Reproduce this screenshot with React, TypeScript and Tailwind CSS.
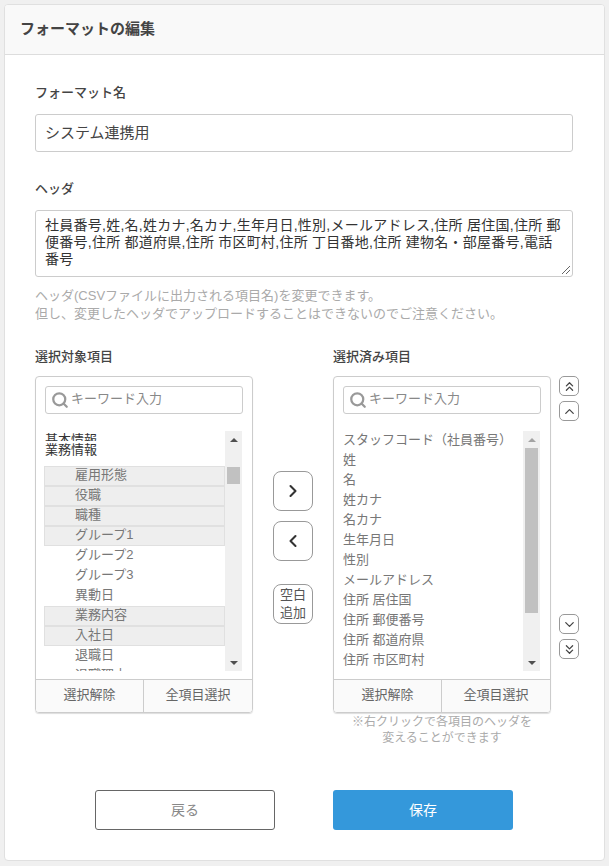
import { ChevronLeft, ChevronRight, ChevronUp, ChevronDown, ChevronsUp, ChevronsDown, Search } from "lucide-react";

const leftItems = [
  { label: "雇用形態", selected: true },
  { label: "役職", selected: true },
  { label: "職種", selected: true },
  { label: "グループ1", selected: true },
  { label: "グループ2", selected: false },
  { label: "グループ3", selected: false },
  { label: "異動日", selected: false },
  { label: "業務内容", selected: true },
  { label: "入社日", selected: true },
  { label: "退職日", selected: false },
  { label: "退職理由", selected: false },
];

const rightItems = [
  "スタッフコード（社員番号）",
  "姓",
  "名",
  "姓カナ",
  "名カナ",
  "生年月日",
  "性別",
  "メールアドレス",
  "住所 居住国",
  "住所 郵便番号",
  "住所 都道府県",
  "住所 市区町村",
];

function SearchBox() {
  return (
    <div className="mx-[9px] mt-[9px] h-[28px] border border-[#ccc] rounded-[3px] flex items-center pl-[5px] gap-[2px] bg-white">
      <Search size={18} strokeWidth={3} className="text-[#999] shrink-0" />
      <span className="text-[13px] leading-[16px] pb-[2px] text-[#888]">キーワード入力</span>
    </div>
  );
}

function ScrollBar({ thumbTop, thumbHeight, upColor }: { thumbTop: number; thumbHeight: number; upColor: string }) {
  return (
    <div className="w-[17px] h-full bg-[#f0f0f0] flex flex-col items-center shrink-0">
      <div className="h-[17px] shrink-0 flex items-center justify-center">
        <div className="w-0 h-0 border-x-[4px] border-x-transparent border-b-[4px]" style={{ borderBottomColor: upColor }} />
      </div>
      <div className="flex-1 w-full px-[2px]">
        <div className="bg-[#c1c1c1] w-full" style={{ marginTop: thumbTop, height: thumbHeight }} />
      </div>
      <div className="h-[17px] shrink-0 flex items-center justify-center">
        <div className="w-0 h-0 border-x-[4px] border-x-transparent border-t-[4px] border-t-[#505050]" />
      </div>
    </div>
  );
}

function PanelFooter() {
  return (
    <div className="mt-[8px] h-[33px] border-t border-[#ccc] bg-[#fafafa] flex text-[13px] leading-[16px] text-[#666] rounded-b-[3px]">
      <div className="w-[108px] border-r border-[#ccc] flex items-center justify-center pb-[3px]">選択解除</div>
      <div className="flex-1 flex items-center justify-center pb-[3px]">全項目選択</div>
    </div>
  );
}

function OrderButton({ children }: { children: React.ReactNode }) {
  return (
    <button className="w-[20px] h-[20px] border border-[#999] rounded-[5px] flex items-center justify-center text-[#444] bg-white">
      {children}
    </button>
  );
}

export default function App() {
  return (
    <div className="min-h-[866px] bg-[#f0f0f0] px-[4px] pt-[4px] pb-[5px] font-['Liberation_Sans','Noto_Sans_CJK_JP',sans-serif]">
      <div className="h-[857px] bg-white border border-[#e0e0e0] rounded-[4px] overflow-hidden">
        <div className="h-[50px] bg-[#f9f9f9] border-b border-[#ddd] flex items-center pl-[15px] text-[15px] font-bold text-[#444]">
          フォーマットの編集
        </div>

        <div className="px-[30px]">
          <label className="block mt-[28px] text-[13px] font-medium text-[#444] leading-[20px]">フォーマット名</label>
          <div className="mt-[11px] h-[38px] w-[538px] border border-[#ccc] rounded-[3px] flex items-center px-[9px] text-[15px] text-[#444]">
            システム連携用
          </div>

          <label className="block mt-[27px] text-[13px] font-medium text-[#444] leading-[20px]">ヘッダ</label>
          <div className="relative mt-[11px] h-[67px] w-[538px] border border-[#ccc] rounded-[3px] pl-[9px] pr-[8px] pt-[6px] text-[14px] leading-[17px] tracking-[0.25px] text-[#333]">
            社員番号,姓,名,姓カナ,名カナ,生年月日,性別,メールアドレス,住所 居住国,住所 郵便番号,住所 都道府県,住所 市区町村,住所 丁目番地,住所 建物名・部屋番号,電話番号
            <svg className="absolute right-[1px] bottom-[1px]" width="10" height="10" viewBox="0 0 10 10">
              <path d="M1 9 L9 1 M5 9 L9 5" stroke="#666" strokeWidth="1" />
            </svg>
          </div>
          <p className="mt-[10px] text-[13px] leading-[18px] text-[#aaa]">
            ヘッダ(CSVファイルに出力される項目名)を変更できます。
            <br />
            但し、変更したヘッダでアップロードすることはできないのでご注意ください。
          </p>

          <div className="mt-[24px] flex items-start">
            <div className="w-[218px] shrink-0">
              <div className="text-[13px] font-medium text-[#444] leading-[20px]">選択対象項目</div>
              <div className="mt-[9px] h-[337px] border border-[#ccc] rounded-[4px] shadow-[0_1px_1px_#ddd]">
                <SearchBox />
                <div className="mt-[17px] h-[240px] ml-[8px] mr-[10px] flex">
                  <div className="w-[181px] h-full overflow-hidden">
                    <div className="h-[10px] overflow-hidden text-[13px] leading-[18px] text-[#333] pl-[1px]">基本情報</div>
                    <div className="h-[25px] text-[13px] leading-[18px] text-[#333] pl-[1px]">業務情報</div>
                    {leftItems.map((item) => (
                      <div
                        key={item.label}
                        className={
                          item.selected
                            ? "h-[20px] bg-[#eee] border border-[#e0e0e0] pl-[30px] text-[13px] leading-[16px] text-[#777]"
                            : "h-[20px] pl-[31px] text-[13px] leading-[18px] text-[#777]"
                        }
                      >
                        {item.label}
                      </div>
                    ))}
                  </div>
                  <ScrollBar thumbTop={19} thumbHeight={17} upColor="#505050" />
                </div>
                <PanelFooter />
              </div>
            </div>

            <div className="w-[80px] shrink-0 flex flex-col items-center pt-[124px]">
              <button className="w-[40px] h-[40px] border border-[#999] rounded-[8px] flex items-center justify-center text-[#333] bg-white">
                <ChevronRight size={20} strokeWidth={2.5} />
              </button>
              <button className="mt-[10px] w-[40px] h-[40px] border border-[#999] rounded-[8px] flex items-center justify-center text-[#333] bg-white">
                <ChevronLeft size={20} strokeWidth={2.5} />
              </button>
              <button className="mt-[23px] w-[40px] h-[40px] border border-[#999] rounded-[8px] text-[13px] leading-[18px] text-[#555] bg-white">
                空白
                <br />
                追加
              </button>
            </div>

            <div className="w-[218px] shrink-0">
              <div className="text-[13px] font-medium text-[#444] leading-[20px]">選択済み項目</div>
              <div className="mt-[9px] h-[337px] border border-[#ccc] rounded-[4px] shadow-[0_1px_1px_#ddd]">
                <SearchBox />
                <div className="mt-[17px] h-[240px] ml-[9px] mr-[10px] flex">
                  <div className="w-[180px] h-full overflow-hidden">
                    {rightItems.map((item) => (
                      <div key={item} className="h-[20px] text-[13px] leading-[18px] text-[#777]">
                        {item}
                      </div>
                    ))}
                  </div>
                  <ScrollBar thumbTop={0} thumbHeight={165} upColor="#a3a3a3" />
                </div>
                <PanelFooter />
              </div>
              <p className="mt-[1px] text-center text-[12px] leading-[16px] text-[#aaa]">
                ※右クリックで各項目のヘッダを
                <br />
                変えることができます
              </p>
            </div>

            <div className="ml-[8px] mt-[29px] h-[283px] flex flex-col">
              <OrderButton><ChevronsUp size={15} strokeWidth={2} /></OrderButton>
              <div className="mt-[5px]"><OrderButton><ChevronUp size={15} strokeWidth={2} /></OrderButton></div>
              <div className="mt-auto"><OrderButton><ChevronDown size={15} strokeWidth={2} /></OrderButton></div>
              <div className="mt-[5px]"><OrderButton><ChevronsDown size={15} strokeWidth={2} /></OrderButton></div>
            </div>
          </div>

          <div className="mt-[44px] flex pl-[60px] gap-[58px]">
            <button className="w-[180px] h-[40px] border border-[#666] rounded-[3px] text-[14px] text-[#888] bg-white">戻る</button>
            <button className="w-[180px] h-[40px] rounded-[3px] text-[14px] text-white bg-[#3498db]">保存</button>
          </div>
        </div>
      </div>
    </div>
  );
}
